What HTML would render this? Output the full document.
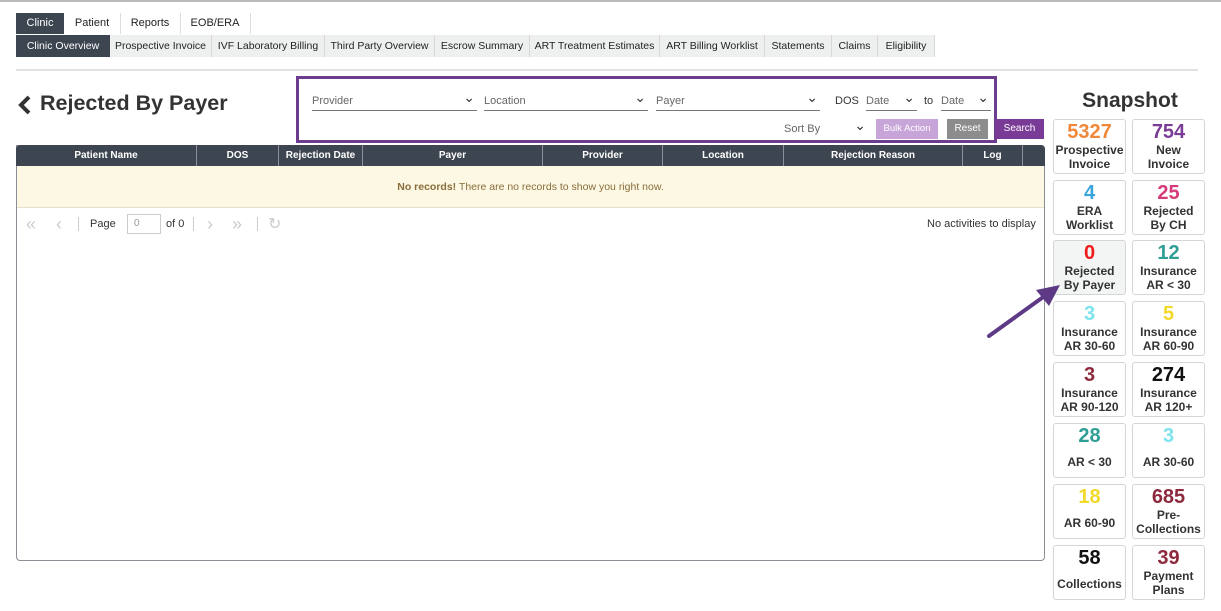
<!DOCTYPE html><html><head><style>
body{margin:0;width:1221px;height:611px;background:#fff;font-family:"Liberation Sans",Arial,sans-serif;position:relative;overflow:hidden}
.a{position:absolute}
.t1{top:13px;height:21px;font-size:11px;line-height:21px;text-align:center;color:#222}
.t2{top:35px;height:22px;font-size:10.5px;line-height:22px;text-align:center;color:#222;background:#eef0f0;border-right:1px solid #d8d8d8}
.dk{background:#3d4551;color:#fff}
.th{top:145px;height:21px;line-height:21px;font-size:10px;font-weight:bold;color:#fff;text-align:center;border-right:1px solid #8a9099}
.sel{top:90px;height:20px;border-bottom:1px solid #777;font-size:11px;color:#666;line-height:22px}
.sel:after{content:"⌄";position:absolute;right:2px;top:-4px;font-size:14px;color:#333}
.c{width:73px;height:55px;border:1px solid #d5d5d5;border-radius:3px;text-align:center;font-weight:bold;color:#333;font-size:12px;line-height:14px;box-sizing:border-box}
.c b{display:block;font-size:20px;line-height:22px;margin-top:1px}
.pg{top:214px;font-size:18px;color:#ccc}
</style></head><body>
<div class="a" style="left:0;top:0;width:1221px;height:2px;background:#bbb"></div>
<div class="a t1 dk" style="left:16px;width:48px">Clinic</div>
<div class="a t1" style="left:64px;width:56px;border-right:1px solid #ddd">Patient</div>
<div class="a t1" style="left:120px;width:60px;border-right:1px solid #ddd">Reports</div>
<div class="a t1" style="left:180px;width:70px;border-right:1px solid #ddd">EOB/ERA</div>
<div class="a t2 dk" style="left:16px;width:94px">Clinic Overview</div>
<div class="a t2" style="left:110px;width:101px">Prospective Invoice</div>
<div class="a t2" style="left:212px;width:112px">IVF Laboratory Billing</div>
<div class="a t2" style="left:325px;width:109px">Third Party Overview</div>
<div class="a t2" style="left:435px;width:94px">Escrow Summary</div>
<div class="a t2" style="left:530px;width:129px">ART Treatment Estimates</div>
<div class="a t2" style="left:660px;width:104px">ART Billing Worklist</div>
<div class="a t2" style="left:765px;width:66px">Statements</div>
<div class="a t2" style="left:832px;width:45px">Claims</div>
<div class="a t2" style="left:878px;width:56px">Eligibility</div>
<div class="a" style="left:16px;top:69px;width:1182px;height:2px;background:#e2e2e2"></div>
<svg class="a" style="left:17px;top:95px" width="16" height="20"><polyline points="12,2 4,10 12,18" fill="none" stroke="#333" stroke-width="4"/></svg>
<div class="a" style="left:40px;top:91px;font-size:21.5px;font-weight:bold;color:#333">Rejected By Payer</div>
<div class="a" style="left:296px;top:76px;width:695px;height:61px;border:3px solid #6c3d8f"></div>
<div class="a sel" style="left:312px;width:165px">Provider</div>
<div class="a sel" style="left:484px;width:164px">Location</div>
<div class="a sel" style="left:656px;width:164px">Payer</div>
<div class="a" style="left:835px;top:95px;font-size:11px;color:#333">DOS</div>
<div class="a sel" style="left:866px;width:51px">Date</div>
<div class="a" style="left:924px;top:95px;font-size:11px;color:#333">to</div>
<div class="a sel" style="left:941px;width:50px">Date</div>
<div class="a sel" style="left:784px;top:118px;width:84px;border:none">Sort By</div>
<div class="a" style="left:876px;top:119px;width:62px;height:20px;background:#c8a5d8;color:#fff;font-size:9.5px;line-height:20px;text-align:center">Bulk Action</div>
<div class="a" style="left:947px;top:119px;width:41px;height:20px;background:#8c8c8c;color:#fff;font-size:10px;line-height:20px;text-align:center">Reset</div>
<div class="a" style="left:995px;top:119px;width:49px;height:20px;background:#7a3b96;color:#fff;font-size:10px;line-height:20px;text-align:center">Search</div>
<div class="a" style="left:16px;top:145px;width:1027px;height:414px;border:1px solid #8a8f96;border-radius:0 4px 4px 4px"></div>
<div class="a" style="left:16px;top:145px;width:1029px;height:21px;background:#3d4551;border-radius:4px 4px 0 0"></div>
<div class="a th" style="left:16px;width:180px">Patient Name</div>
<div class="a th" style="left:197px;width:81px">DOS</div>
<div class="a th" style="left:279px;width:83px">Rejection Date</div>
<div class="a th" style="left:363px;width:179px">Payer</div>
<div class="a th" style="left:543px;width:119px">Provider</div>
<div class="a th" style="left:663px;width:120px">Location</div>
<div class="a th" style="left:784px;width:178px">Rejection Reason</div>
<div class="a th" style="left:963px;width:59px">Log</div>
<div class="a" style="left:17px;top:166px;width:1027px;height:41px;background:#fcf8e3;border-bottom:1px solid #e6e0c8;text-align:center;line-height:43px;font-size:10.5px;color:#8a6d3b"><b>No records!</b> There are no records to show you right now.</div>
<div class="a pg" style="left:26px">«</div>
<div class="a pg" style="left:56px">‹</div>
<div class="a" style="left:78px;top:217px;height:14px;border-left:1px solid #ccc"></div>
<div class="a" style="left:90px;top:218px;font-size:11px;color:#333">Page</div>
<div class="a" style="left:127px;top:214px;width:32px;height:18px;border:1px solid #ccc;font-size:10px;color:#999;line-height:18px;text-indent:6px">0</div>
<div class="a" style="left:166px;top:218px;font-size:11px;color:#333">of 0</div>
<div class="a" style="left:193px;top:217px;height:14px;border-left:1px solid #ccc"></div>
<div class="a pg" style="left:207px">›</div>
<div class="a pg" style="left:232px">»</div>
<div class="a" style="left:257px;top:217px;height:14px;border-left:1px solid #ccc"></div>
<div class="a" style="left:268px;top:214px;font-size:16px;color:#ccc">↻</div>
<div class="a" style="left:927px;top:218px;font-size:11px;color:#333">No activities to display</div>
<div class="a" style="left:1053px;top:89px;width:154px;text-align:center;font-size:21px;font-weight:bold;color:#333">Snapshot</div>
<div class="a c" style="left:1053px;top:119px"><b style="color:#f0883a">5327</b>Prospective Invoice</div>
<div class="a c" style="left:1132px;top:119px"><b style="color:#7b3c96">754</b>New<br>Invoice</div>
<div class="a c" style="left:1053px;top:180px"><b style="color:#3aa5dc">4</b>ERA<br>Worklist</div>
<div class="a c" style="left:1132px;top:180px"><b style="color:#d63a7a">25</b>Rejected<br>By CH</div>
<div class="a c" style="left:1053px;top:240px;background:#f3f4f4"><b style="color:#f01c1c">0</b>Rejected<br>By Payer</div>
<div class="a c" style="left:1132px;top:240px"><b style="color:#2f9e95">12</b>Insurance<br>AR &lt; 30</div>
<div class="a c" style="left:1053px;top:301px"><b style="color:#7ee3ec">3</b>Insurance<br>AR 30-60</div>
<div class="a c" style="left:1132px;top:301px"><b style="color:#f2d92a">5</b>Insurance<br>AR 60-90</div>
<div class="a c" style="left:1053px;top:362px"><b style="color:#8e2a3e">3</b>Insurance<br>AR 90-120</div>
<div class="a c" style="left:1132px;top:362px"><b style="color:#111">274</b>Insurance<br>AR 120+</div>
<div class="a c" style="left:1053px;top:423px;line-height:30px"><b style="color:#2f9e95">28</b>AR &lt; 30</div>
<div class="a c" style="left:1132px;top:423px;line-height:30px"><b style="color:#7ee3ec">3</b>AR 30-60</div>
<div class="a c" style="left:1053px;top:484px;line-height:30px"><b style="color:#f2d92a">18</b>AR 60-90</div>
<div class="a c" style="left:1132px;top:484px"><b style="color:#8e2a3e">685</b>Pre-<br>Collections</div>
<div class="a c" style="left:1053px;top:545px;line-height:30px"><b style="color:#111">58</b>Collections</div>
<div class="a c" style="left:1132px;top:545px"><b style="color:#8e2a3e">39</b>Payment<br>Plans</div>
<svg class="a" style="left:980px;top:280px" width="90" height="65"><line x1="9" y1="56" x2="66" y2="15" stroke="#5e3a86" stroke-width="4" stroke-linecap="round"/><polygon points="80,5 56,10 69,26" fill="#5e3a86"/></svg>
</body></html>
